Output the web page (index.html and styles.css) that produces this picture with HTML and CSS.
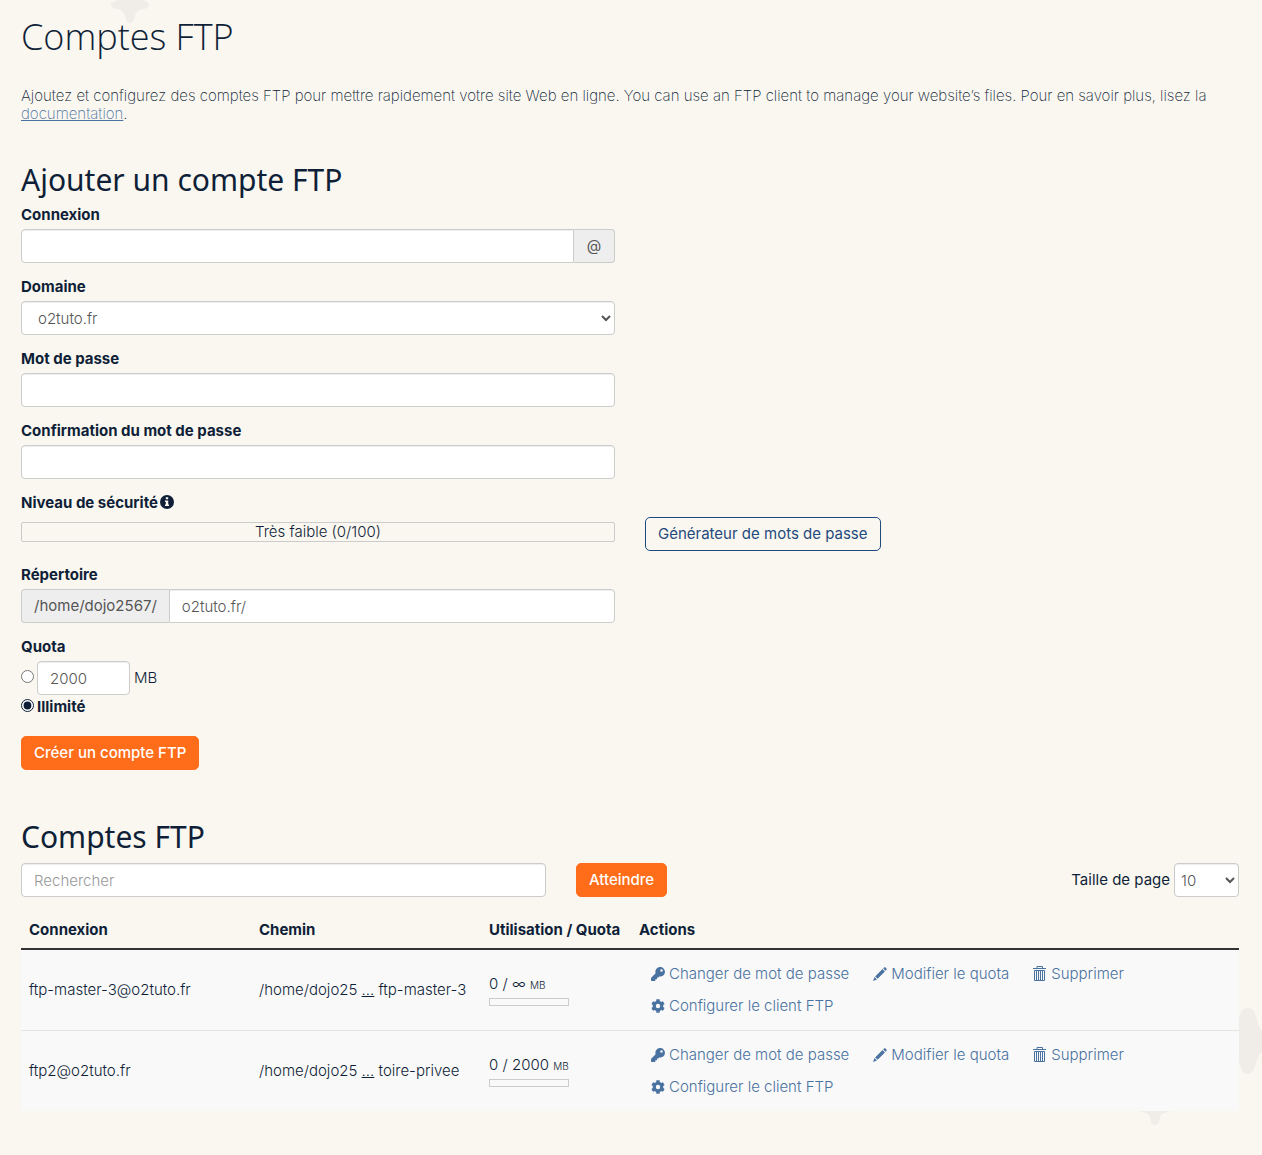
FILE: index.html
```html
<!DOCTYPE html>
<html lang="fr">
<head>
<meta charset="utf-8">
<meta name="viewport" content="width=device-width, initial-scale=1">
<title>Comptes FTP</title>
<link rel="stylesheet" href="styles.css">
</head>
<body>
<svg class="sprite" aria-hidden="true">
  <symbol id="i-key" viewBox="0 0 512 512"><path fill-rule="evenodd" d="M512 176a176 176 0 0 1-211 172l-25 27a24 24 0 0 1-18 9h-34v40a24 24 0 0 1-24 24h-40v40a24 24 0 0 1-24 24H24a24 24 0 0 1-24-24v-78a24 24 0 0 1 7-17l162-162A176 176 0 1 1 512 176zM336 128a48 48 0 1 0 96 0 48 48 0 0 0-96 0z"/></symbol>
  <symbol id="i-gear" viewBox="0 0 512 512"><path fill-rule="evenodd" d="M487 316l-42-25a193 193 0 0 0 0-70l42-25c5-3 7-9 6-14a249 249 0 0 0-55-95c-4-4-10-5-15-2l-42 24a190 190 0 0 0-61-35V25c0-5-4-10-9-12a251 251 0 0 0-110 0c-5 2-9 7-9 12v49a190 190 0 0 0-61 35L89 85c-5-3-11-2-15 2a249 249 0 0 0-55 95c-1 5 1 11 6 14l42 25a193 193 0 0 0 0 70l-42 25c-5 3-7 9-6 14a249 249 0 0 0 55 95c4 4 10 5 15 2l42-24a190 190 0 0 0 61 35v49c0 5 4 10 9 12a251 251 0 0 0 110 0c5-2 9-7 9-12v-49a190 190 0 0 0 61-35l42 24c5 3 11 2 15-2a249 249 0 0 0 55-95c1-5-1-11-6-14zM256 336a80 80 0 1 1 0-160 80 80 0 0 1 0 160z"/></symbol>
  <symbol id="i-pencil" viewBox="0 0 14 14"><path d="M11 .6c.5-.5 1-.5 1.500 0l.9.9c.5.5.5 1 0 1.500l-.8.8L10.200 1.400zM9.500 2.100l2.400 2.400-7.300 7.300-2.400-2.400zM1.600 10.100l2.300 2.300L0 14z"/></symbol>
  <symbol id="i-trash" viewBox="0 0 14 16"><path d="M4 2.500V.5h5.500v2M0 2.500h13M1.500 4.500h10v10h-10zM3.500 5v9M5.500 5v9M7.500 5v9M9.500 5v9" fill="none" stroke="currentColor"/></symbol>
</svg>
<div class="page">
  <svg class="deco deco-top" viewBox="0 0 40 24" aria-hidden="true"><path d="M8 0H32C37 1 39 3 39 5S36 9 33 9C28 10 26 12 25 16C24 20 23 23 20 23S16 20 15 16C14 12 12 10 7 9C4 9 1 7 1 5S3 1 8 0z"/></svg>
  <svg class="deco deco-side" viewBox="0 0 23 66" aria-hidden="true"><path d="M0 10C2 3 4 0 9 0S15 3 17 8C18 13 20 20 23 23V44C19 47 18 54 16 59C14 64 12 66 8 66S3 63 0 54z"/></svg>
  <svg class="deco deco-bottom" viewBox="0 0 32 60" aria-hidden="true"><path d="M12 0H20L24 42L31 46C27 48 22 48 21 52C20 56 20 60 16 60S12 56 11 52C10 48 5 48 1 46L8 42z"/></svg>

  <main>
    <h1>Comptes FTP</h1>
    <p class="lead">Ajoutez et configurez des comptes FTP pour mettre rapidement votre site Web en ligne. You can use an FTP client to manage your website’s files. Pour en savoir plus, lisez la <a href="#">documentation</a>.</p>

    <section>
      <h2>Ajouter un compte FTP</h2>
      <form class="form">
        <div class="group">
          <label for="login">Connexion</label>
          <div class="addon-row"><input class="control" id="login" type="text"><span class="addon addon-end">@</span></div>
        </div>
        <div class="group">
          <label for="domain">Domaine</label>
          <select class="control" id="domain"><option>o2tuto.fr</option></select>
        </div>
        <div class="group">
          <label for="pass">Mot de passe</label>
          <input class="control" id="pass" type="password">
        </div>
        <div class="group">
          <label for="pass2">Confirmation du mot de passe</label>
          <input class="control" id="pass2" type="password">
        </div>
        <div class="group wide">
          <div class="label">Niveau de sécurité<svg class="info" viewBox="0 0 14 14" role="img" aria-label="Aide"><circle cx="7" cy="7" r="7"/><path d="M5.800 2.300h2.400v2H5.800zM5 5.500h3.200v4H9V11H5V9.500h.8V7H5z" fill="#faf7f0"/></svg></div>
          <div class="columns">
            <div class="strength">Très faible (0/100)</div>
            <button class="btn btn-outline" type="button">Générateur de mots de passe</button>
          </div>
        </div>
        <div class="group">
          <label for="dir">Répertoire</label>
          <div class="addon-row"><span class="addon addon-start">/home/dojo2567/</span><input class="control" id="dir" type="text" value="o2tuto.fr/"></div>
        </div>
        <fieldset class="group quota">
          <legend>Quota</legend>
          <div class="choice"><input type="radio" name="quota" aria-label="Quota limité"><input class="control amount" type="text" value="2000" aria-label="Quota en MB"><span>MB</span></div>
          <div class="choice unlimited"><input type="radio" name="quota" id="unlimited" checked><label for="unlimited">Illimité</label></div>
        </fieldset>
        <button class="btn btn-primary" type="button">Créer un compte FTP</button>
      </form>
    </section>

    <section class="accounts">
      <h2>Comptes FTP</h2>
      <div class="toolbar">
        <input class="control search" type="search" placeholder="Rechercher" aria-label="Rechercher">
        <button class="btn btn-primary" type="button">Atteindre</button>
        <label class="size-label" for="size">Taille de page</label>
        <select class="control size" id="size"><option>10</option></select>
      </div>
      <table>
        <thead><tr><th class="c-login">Connexion</th><th class="c-path">Chemin</th><th class="c-usage">Utilisation / Quota</th><th>Actions</th></tr></thead>
        <tbody>
          <tr>
            <td>ftp-master-3@o2tuto.fr</td>
            <td>/home/dojo25 <u>...</u> ftp-master-3</td>
            <td>0 / ∞ <small>MB</small><div class="meter"></div></td>
            <td><div class="actions">
              <a href="#"><svg><use href="#i-key"/></svg>Changer de mot de passe</a>
              <a href="#"><svg><use href="#i-pencil"/></svg>Modifier le quota</a>
              <a href="#"><svg class="trash"><use href="#i-trash"/></svg>Supprimer</a>
              <a href="#"><svg><use href="#i-gear"/></svg>Configurer le client FTP</a>
            </div></td>
          </tr>
          <tr>
            <td>ftp2@o2tuto.fr</td>
            <td>/home/dojo25 <u>...</u> toire-privee</td>
            <td>0 / 2000 <small>MB</small><div class="meter"></div></td>
            <td><div class="actions">
              <a href="#"><svg><use href="#i-key"/></svg>Changer de mot de passe</a>
              <a href="#"><svg><use href="#i-pencil"/></svg>Modifier le quota</a>
              <a href="#"><svg class="trash"><use href="#i-trash"/></svg>Supprimer</a>
              <a href="#"><svg><use href="#i-gear"/></svg>Configurer le client FTP</a>
            </div></td>
          </tr>
        </tbody>
      </table>
    </section>
  </main>
</div>
</body>
</html>
```
FILE: styles.css
```css
* { box-sizing: border-box; }
body {
  margin: 0;
  background: #faf7f0;
  color: #0f1f38;
  font: 300 15px/18px Inter, "Liberation Sans", sans-serif;
}
.sprite { position: absolute; width: 0; height: 0; }
.page { position: relative; min-height: 100vh; overflow: hidden; padding: 17px 23px 44px 21px; }
main { position: relative; }

/* faint background ornaments */
.deco { position: absolute; fill: #f0ede8; }
.deco-top { left: 110px; top: 0; width: 40px; height: 24px; }
.deco-side { right: 0; bottom: 81px; width: 23px; height: 66px; }
.deco-bottom { right: 91px; bottom: 30px; width: 32px; height: 60px; }

h1, h2 { margin: 0; }
h1 { font-family: "Open Sans", sans-serif; font-size: 36px; line-height: 40px; font-weight: 300; }
h2 { font-family: "Noto Sans", sans-serif; font-size: 30px; line-height: 32px; font-weight: 400; margin-bottom: 10px; }
.lead { margin: 30px 0 41px; font-weight: 200; }
a { color: #4a72a0; }

.form { display: flex; flex-direction: column; align-items: flex-start; gap: 15px; }
.group { width: calc(50% - 15px); }
.group.wide { width: 100%; }
.group > label, .label, legend { display: block; margin-bottom: 5px; padding: 0; font-weight: 700; }
.control {
  display: block;
  width: 100%;
  height: 34px;
  padding: 6px 12px;
  border: 1px solid #ccc;
  border-radius: 4px;
  background: #fff;
  box-shadow: inset 0 1px 1px rgba(0, 0, 0, .075);
  color: #555;
  font: inherit;
}
.control::placeholder { color: #999; opacity: 1; }
.addon-row { display: flex; }
.addon-row .control { flex: 1; min-width: 0; }
.addon { min-width: 41px; padding: 7px 12px; border: 1px solid #ccc; background: #eee; color: #555; font-weight: 400; text-align: center; }
.addon-start { border-right: 0; border-radius: 4px 0 0 4px; }
.addon-start + .control { border-radius: 0 4px 4px 0; }
.addon-end { border-left: 0; border-radius: 0 4px 4px 0; }
.addon-row .control:first-child { border-radius: 4px 0 0 4px; }
.label { display: flex; align-items: flex-start; gap: 2px; }
.info { width: 14px; height: 14px; margin-top: 1px; fill: #0f1f38; }
.columns { display: grid; grid-template-columns: 1fr 1fr; gap: 30px; align-items: start; justify-items: start; }
.strength { width: 100%; height: 20px; margin-top: 5px; border: 1px solid #ccc; border-radius: 2px; text-align: center; }

.btn { height: 34px; padding: 0 12px; border: 1px solid; border-radius: 5px; font: inherit; white-space: nowrap; }
.btn-outline { border-color: #1f4a7d; background: transparent; color: #1f4a7d; font-weight: 400; }
.btn-primary { border-color: #ff6c1a; background: #ff6c1a; color: #fff; font-weight: 500; }

.quota { margin: 0; border: 0; padding: 0; }
.choice { display: flex; align-items: center; gap: 4px; }
.choice input[type="radio"] { width: 13px; height: 13px; margin: 0 -1px 4px 0; accent-color: #0f1f38; }
.amount { width: 93px; }
.unlimited { margin: 3px 0 5px; font-weight: 700; }

.accounts { margin-top: 51px; }
.toolbar { display: flex; align-items: center; gap: 30px; }
.search { width: 525px; flex-shrink: 1; }
.size-label { margin-left: auto; margin-right: -26px; font-weight: 400; }
.size { width: 65px; padding: 0 2px; }

table { width: 100%; margin-top: 14px; border-collapse: separate; border-spacing: 0; table-layout: fixed; }
.c-login, .c-path { width: 230px; }
.c-usage { width: 150px; }
th { padding: 10px 8px 9px; border-bottom: 2px solid #333; font-weight: 700; text-align: left; white-space: nowrap; }
td { padding: 8px; background: #f9f9f9; vertical-align: middle; }
tbody tr + tr td { border-top: 1px solid #e5e5e0; }
small { font-size: 10px; }
.meter { width: 80px; height: 8px; margin-top: 4px; border: 1px solid #ccc; }
.actions { display: flex; flex-wrap: wrap; }
.actions a { display: flex; align-items: center; gap: 4px; height: 32px; padding: 0 12px; text-decoration: none; white-space: nowrap; }
.actions svg { width: 14px; height: 14px; fill: currentColor; }
.actions .trash { height: 16px; }
```
